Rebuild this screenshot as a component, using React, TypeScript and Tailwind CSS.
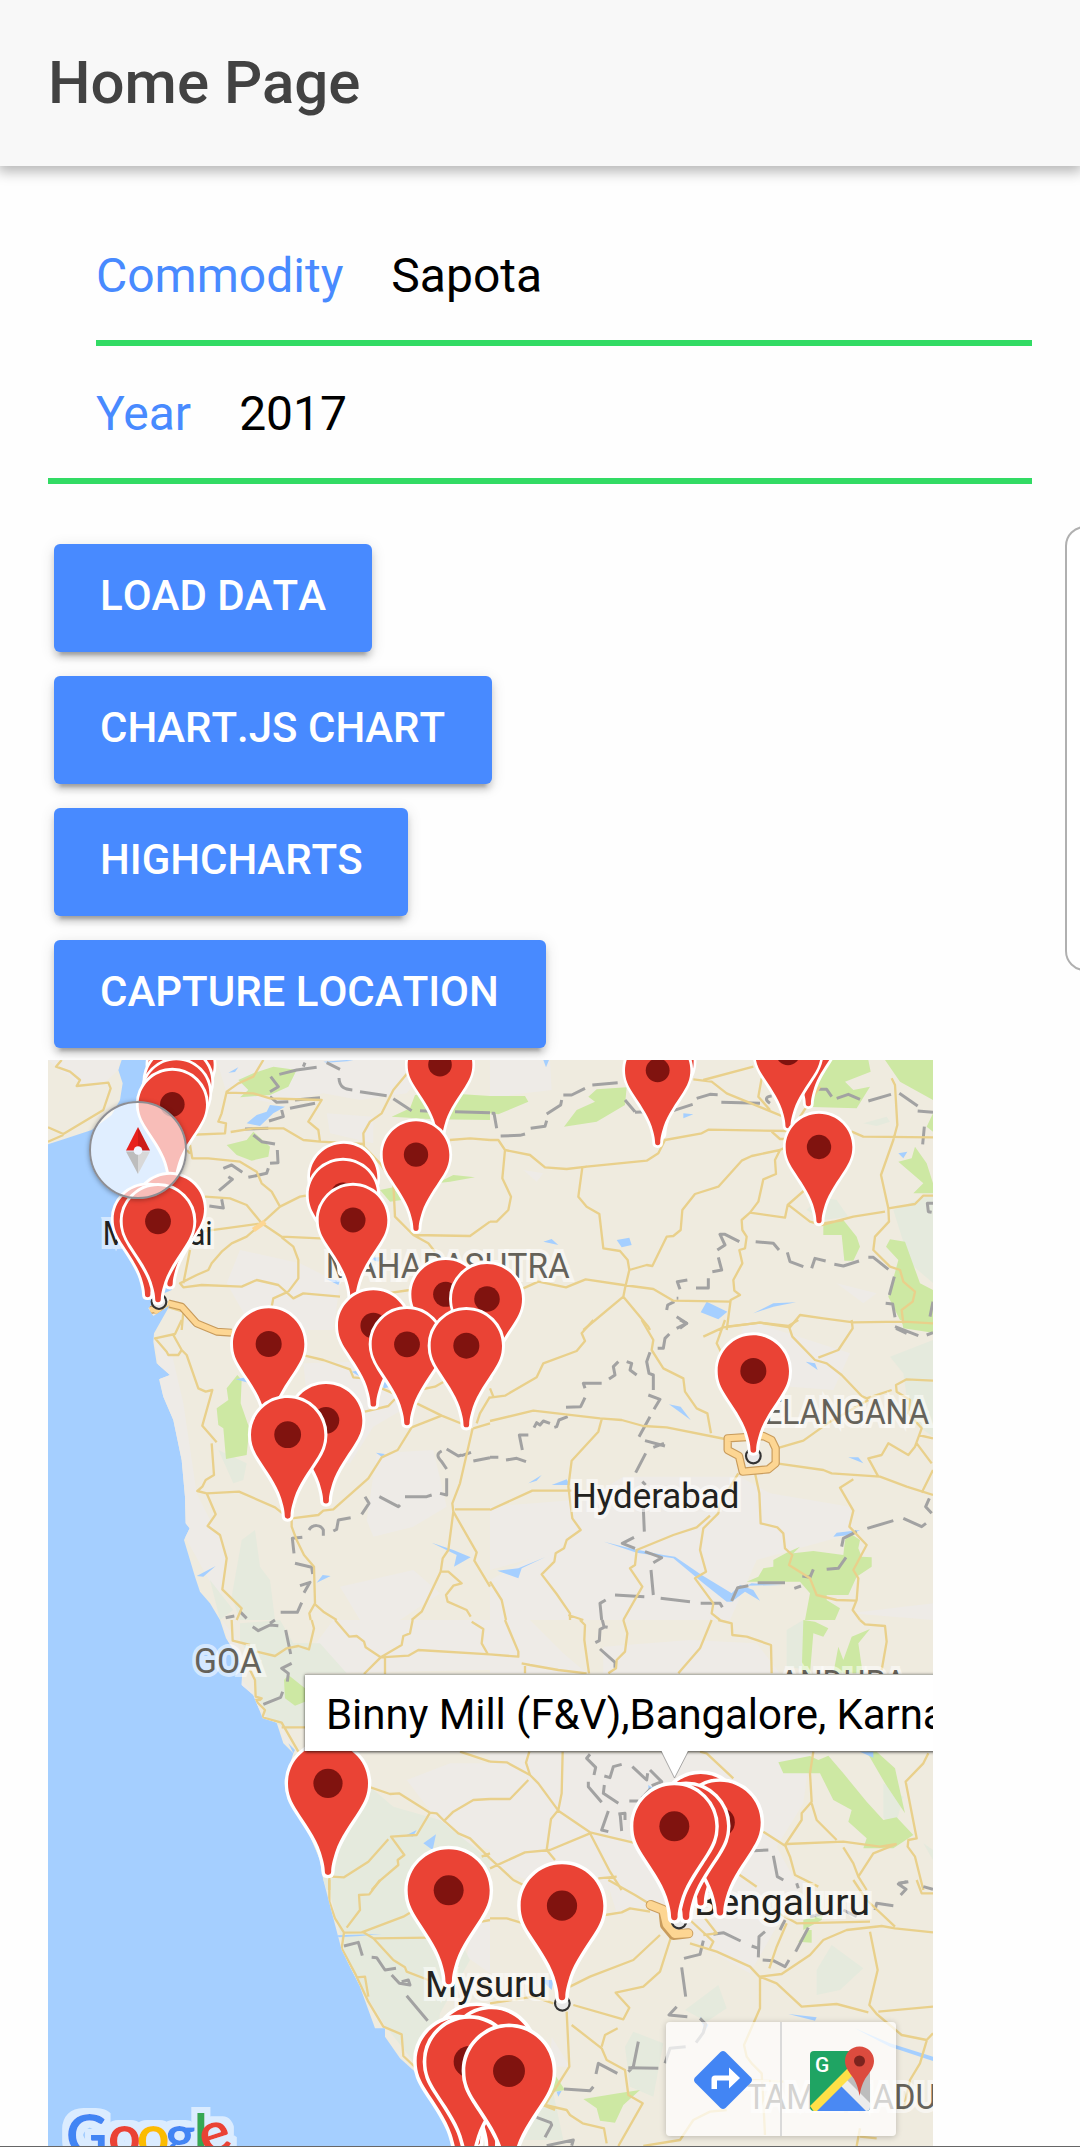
import React from "react";

type Tile = {
  x: number;
  y: number;
  urban?: string;
  hills?: string;
  parks?: string;
  lakes?: string;
  roads?: string;
  borders?: string;
};

// Terrain tiles; each path is drawn relative to its tile's origin.
const tiles: Tile[] = [
  {
    x: 0,
    y: 0,
    urban:
      "M530 30H1180L1100 130 960 150 850 130 700 160 560 130Z M860 190L1000 200 1000 280 870 250Z M600 600L780 640 900 700 880 840 640 840 560 700Z M24 30H240L235 60 180 110 120 100 60 60Z",
    parks:
      "M595 90L640 70 700 50 770 60 745 110 690 135 600 142 625 120Z M560 285L620 270 640 245 690 290 685 320 635 332 590 315Z M1055 200L1110 175 1125 135 1200 128 1350 138V210L1180 208Z M1190 400L1240 375 1305 382 1230 395Z M1020 420L1060 412 1085 450 1050 455Z",
    lakes:
      "M620 220L650 195 680 185 690 165 735 170 700 190 660 228Z M565 68L595 52 585 66Z M850 35L920 30 940 32 860 38Z M855 685L900 692 895 705Z M980 625L1030 620 1015 635Z",
    roads:
      "M65 30L48 50 90 65 120 90 110 108 205 98 212 115 190 180 70 252 24 232 M24 275L70 255 M670 30L640 80 595 100 560 125 545 190 535 215 558 220 555 250 440 255 M560 128L640 130 690 145 845 150 805 215 835 240 840 275 790 270 730 235 640 235 572 246 M840 275L970 282 M1110 60L1060 120 1025 190 990 215 970 250 972 290 1020 340 1060 400 1065 500 1120 555 1290 558 1350 515 M450 285L457 325 505 325 600 335 650 365 665 400 695 425 720 470 665 520 555 535 440 550 M495 440L570 445 620 465 665 520 725 560 840 565 910 560 M720 470L780 440 810 435 M725 562L760 590 775 630 775 685 745 725 M660 525L620 560 575 580 545 605 515 640 505 660 470 675 420 700 430 712 485 705 605 710 650 690 715 705 760 745 790 730 900 740 M745 725L700 745 695 770 630 800 M450 600L430 700 M1120 555L1165 580 1185 605 M360 790L380 770 430 785 425 840 M1230 270L1290 265 1350 270 M1040 730L1110 720 M440 300L450 310",
    borders:
      "M718 73L770 60 830 52 M790 50L795 38 M860 38L900 58 M897 84C898 112 915 118 937 120 M960 125L1040 137 M1060 146L1115 182 M1140 182L1222 186 M1245 185L1350 188 M692 80L715 110 690 125 M690 140L710 157 745 155 M765 150L840 143 M750 175L825 160 M725 180L730 200 687 213 M615 237L685 235 M640 255L665 275 705 282 M712 300L714 338 690 340 M685 355L680 370 625 382 M550 355L575 345 607 367 M565 380L577 388 537 422 M545 448L550 474 508 468",
  },
  {
    x: 1350,
    y: 0,
    urban:
      "M0 30H180L185 120 60 135 0 190Z M100 360L160 370 140 395Z M1040 700L1160 730 1120 760Z",
    hills:
      "M990 440L1040 450 1075 500 1000 510 950 480Z M1120 220L1190 200 1200 215 1160 228Z M1210 480L1330 430V700L1260 640Z",
    parks:
      "M0 138L105 138 115 155 25 193 0 190Z M222 230L260 180 315 155 295 140 320 118 410 112 405 165 320 215Z M1000 30H1135L1142 65 1065 95 1090 120 1140 110 1100 175 940 170Z M1185 30H1329V150L1230 95Z M1225 335L1265 325 1275 290 1310 340 1329 400V430H1270L1300 400Z M1000 520L1060 510 1100 560 1110 590 1090 632H1063L1055 555 1000 555Z M1188 590L1200 568 1245 575 1290 700 1329 720V810H1230L1195 740 1225 630Z M1310 230L1329 190V245Z",
    lakes:
      "M160 30H177L168 52Z M580 190L610 193 580 205Z M160 575L185 567 205 585Z M380 570L418 563 425 585 395 592Z M650 755L712 785 685 808 632 787Z M790 790L850 760 918 757 850 770Z M1225 310L1252 305 1240 325Z",
    roads:
      "M0 270L25 270 45 300 120 315 165 352 230 357 290 350 470 332 505 310 525 270 635 250 655 239 900 243 M45 300L37 385 63 440 55 480 20 515 0 515 M290 350L277 352 265 440 290 470 328 492 340 595 390 603 413 630 418 660 405 715 400 740 280 840 M418 660L470 645 487 648 530 560 550 558 572 540 577 480 615 432 685 410 755 332 785 318 870 300 890 290 M870 300L855 330 858 372 820 388 805 455 780 488 755 510 757 540 770 560 765 595 748 600 757 640 730 690 733 722 750 735 722 750 710 840 M780 488L885 503 893 465 990 380 M893 463L960 515 995 525 1090 500 1185 485 M640 90L790 50 M610 88L665 95 710 130 820 175 880 200 M815 85L805 140 840 180 M845 245L870 267 890 267 M930 200L990 110 M1085 245L1120 260 1329 262 M1205 85L1215 105 1222 225 1210 270 1173 375 1195 475 1197 515 1155 560 1150 600 1200 650 1230 660 1240 695 1275 725 1268 755 1235 780 1240 820 M1195 475L1275 462 1300 437H1329 M100 715L145 695 228 712 287 688 400 705 490 717 550 752 720 755 M400 740L475 830 480 840 M710 830L810 818 900 832 930 795 1000 805 1090 817 1240 815 1329 820 M1000 520L1060 510",
    borders:
      "M32 258L90 256 105 252 M122 235L165 229 170 212 M170 192L212 165 215 150 M220 135L245 135 285 115 M307 105L383 98 M435 185L405 150 M435 187L470 185 M620 145L660 133 683 134 M550 182L608 163 M694 157L810 160 M840 160C825 150 825 140 845 138 M985 118L1010 118 1025 140 M1040 145L1075 133 1110 148 M1135 153L1203 133 M1228 130L1283 168 M1283 183L1329 187 M1303 230L1298 283 M5 190L12 190 20 235 M1329 460L1312 460 1315 485 1325 487 M682 600L705 585 690 553 705 553 748 575 M797 575L850 580 867 600 M892 607L900 635 940 650 M965 655L975 625 1007 633 M1033 643L1060 648 1107 633 M1135 622L1150 622 1195 658 M685 622L695 660 667 665 M655 685V714H618 M570 718L562 695 592 690 M565 745L560 745 M553 755L533 765 530 780 M560 800L590 820 570 835 M1213 680L1198 735 M1187 760L1208 762 1215 802 M1218 835L1250 850 M1329 755L1320 800",
  },
  {
    x: 0,
    y: 810,
    urban:
      "M790 130L1130 120 1120 250 1000 320 930 430 820 420Z M1010 400L1180 390 1220 560 1120 620 1000 650 980 600Z M900 800L1120 750 1200 820 1080 900H960Z M345 60L395 100 430 250 470 520 560 700 540 840 435 650 360 180Z",
    hills:
      "M605 660L645 630 660 740 690 780 705 900 600 900 575 830Z M535 390L620 430 610 480 580 490Z M510 780L580 870 540 900Z",
    parks:
      "M530 265L565 240 560 205 592 165 605 180 602 250 628 325 620 405 558 417 550 325 535 315Z",
    lakes:
      "M587 178L620 172 625 188Z M1175 668L1240 690 1292 712 1242 740 1250 705Z M848 765L872 768 830 788Z M470 768L527 738 490 770Z M935 155L960 150V170Z M1030 180L1055 200 1030 205Z M1008 398L1035 402 1025 410Z",
    roads:
      "M425 0L405 42 345 55 380 95 385 105 415 105 425 90 400 45 M425 90L440 105 475 205 497 215 517 210 487 317 530 367 M515 370L522 465 497 480 487 500 472 513 500 520 597 515 705 562 740 590 M500 520L527 583 503 618 540 645 560 715 547 808 605 865 590 900 M795 107L850 120 930 148 940 172 970 175 M975 275L1045 258 1065 237 M1025 205L1060 220 M1150 207L1185 200 1215 183 M1130 250L1205 287 1275 315 M1205 287L1115 322 1073 390 1025 412 985 475 880 568 850 572 835 585 755 595 755 620 770 660 792 705 822 740 825 850 808 880 812 900 M822 850L850 875 890 900 M765 540L755 595 M1300 325L1350 310 M1310 310L1320 280 1350 230 M1298 325L1260 490 1237 550 1240 575 1225 690 1208 715 1202 755 1145 875 1115 900 M1245 568H1350 M1240 575L1310 697 1303 722 1350 800 M1205 755L1225 755 1265 790 1240 797 1218 825 1223 845 1280 870 1292 890",
    borders:
      "M1220 387L1255 408 1265 405 M1300 423L1350 413 M1265 407L1293 397 M1205 393C1190 400 1190 410 1205 425L1220 447 M1220 475V525L1200 520 M1095 530H1160L1175 525 M1018 530L1075 560 1080 555 M975 530L987 550 965 583 M932 593L895 600 890 628 880 633 M850 647L850 630C842 613 818 612 807 630 M787 652L757 655 762 700 M765 730L815 742 818 762 M780 797L810 787 792 818 M785 848L772 877H722 M600 875L620 895 M557 893L583 888",
  },
  {
    x: 1350,
    y: 810,
    urban:
      "M250 560L400 470 750 470 840 520 1080 560 1090 640 800 720 720 900H0V780L150 700Z M770 0L1080 100 1030 210 900 200 700 170Z M0 560L250 540 280 620 180 700 0 750Z M1080 880L1329 850V900Z",
    hills: "M1200 110L1329 60V350L1260 300 1240 160Z",
    parks:
      "M1235 0H1329V38L1240 25Z M820 745L850 740 850 720 890 698 930 680 910 700 970 693 1060 705 1065 660 1080 640 1110 660 1105 685 1115 710 1145 712 1145 740 1100 770 1075 825 1010 825 1010 840 1050 865 1035 900H945L960 820 930 785H770L805 770Z",
    lakes:
      "M537 253L572 260 602 300Z M947 125L975 130 983 150Z M115 490L155 465 140 482Z M185 495L230 478 240 495Z M22 752L85 745 165 712 95 745 85 775Z M342 665L420 685 520 705 555 710 635 765 725 820 750 795 790 810 810 842 765 815 725 845 710 845 640 790 550 715 440 698Z M785 790L880 795 770 797Z M1030 650L1040 638 1110 630 1080 645Z M1075 412H1105L1120 430Z",
    roads:
      "M310 0L275 40 285 63 260 93 160 130 140 172 45 227 0 233 M455 0L490 60 485 90 520 145 580 175 585 215 620 265 652 280 663 340 M0 303L130 272 330 295 395 300 460 318 530 322 705 357 M335 298L325 335 245 422 235 500 247 595 272 630 230 660 222 685 197 700 193 725 155 763 200 822 240 880 240 900 M245 512H127L0 570 M705 0L680 70 700 110 M640 50L700 22 810 8 895 18 925 0 M897 20L907 50 975 120 1010 130 1055 165 1115 228 1130 235 1205 210 M985 113L1045 90 1088 25 1085 0 M860 385L940 362 1020 305 1135 240 M1329 182L1250 178 1218 195 1220 215 1260 240 1255 280 1295 325 1275 380 1255 405 1195 370 1175 405 1135 415 1165 470 M1285 345L1329 355 M1280 370L1325 430 M1329 450L1295 518 M860 430L1000 450 1025 460 1170 470 1250 500 1329 525 M793 450L808 520 812 610 862 622 880 640 885 685 907 705 897 735 960 775 980 825 1040 840 1100 842 M1090 478L1050 503 1090 572 1078 620 1130 675 1090 750 1105 775 1100 840 1088 870 1110 900 M745 460L690 550 685 580 640 625 630 690 648 755 615 775 670 850 665 880 690 900 M660 587L620 622 550 645 440 690 435 735 420 745 457 800 400 900 M0 205L10 230 M0 785L35 840 48 900 M235 885L280 900",
    borders:
      "M560 25L590 10 570 0 M538 42L525 55 520 85H503 M480 97L470 125 477 160 490 165V210 M475 225L510 238 492 268 M480 290L447 350 M465 362L525 378 M490 382L522 370 M467 400L437 458 M457 485L467 495 M460 565L463 635 M432 652L397 670 435 685 M465 695L515 713 490 728 M483 750L490 825 M375 825L463 830 M512 835L600 845 M632 850L690 850 697 862 M725 843L743 803 775 797 M803 788L885 788 M913 805L933 798 M937 768L960 772 970 748 M1010 748L1045 745 1068 712 M1055 680L1060 655 1100 635 M1132 625L1210 602 M1240 595L1295 620 1308 610 M1318 535L1307 560 1325 580 M335 190H280L285 205 M385 125L370 140 375 165 357 177 M410 125L425 130 420 150 440 165 M285 233L272 260 228 262 M233 290L207 300 200 320 193 322 M180 310L160 303 150 315 140 308 132 323 M115 345H88L97 390 M0 412L25 412 M48 420L80 415 108 425 M347 840L330 850 335 900 M1215 20L1285 47 M1310 45L1329 38",
  },
  {
    x: 0,
    y: 1710,
    urban:
      "M880 0H1350V150L790 160 820 80Z M1100 480L1230 430 1350 430V690L1230 650Z M545 0L585 50 610 110 605 180 640 220 665 280 640 240 600 190Z M715 310L750 370 740 375Z",
    hills:
      "M600 10L720 0 760 70 840 70 920 160 795 160V320L740 330 680 290 650 220 640 130 600 60Z M760 400L990 500 1060 560 1200 600 1350 720V810H860L790 600Z",
    parks: "M732 180L745 165 795 205V245L765 257 735 235Z",
    lakes:
      "M1150 670L1188 643 1178 690Z M1100 645L1130 630 1118 650Z M745 370L765 390 760 400Z",
    roads:
      "M575 0L578 62 630 75 M650 95L705 108 740 85 775 78 807 88 822 25 815 0 M630 150L645 180 647 230 665 235 660 240 645 240 675 270 667 292 725 308 775 395 M725 322H795 M885 0L928 50 950 48 972 65 977 82 1022 112 972 162 M1022 112L1105 107 1135 90 1350 103 M1035 115V162 M1022 112L1030 107 1085 75 1090 48 1110 40 1118 0 M1295 5L1330 27 1325 70 1345 105 M1260 395L1350 425 M985 500L1050 522 1077 520 1170 578 1190 580 1210 600 1255 640 1290 655 1350 715 M1170 578L1130 645 1053 650 1093 705 1073 720 1075 735 1020 782 995 810 M1210 605L1240 575 1300 540 1350 537 M1045 658L985 725 912 772 875 770 M868 770V810 M1325 710L1350 700",
    borders:
      "M737 30L752 102 M638 20L655 32 690 15 715 17 M690 10L705 0 M755 130L725 145 745 160 742 185 M728 215L722 232 670 253",
  },
  {
    x: 1350,
    y: 1710,
    urban:
      "M0 0H120L220 100 290 160 0 160Z M340 80L600 60 800 70 870 160H340Z M0 400H960L940 550 860 680 930 810H200L0 740Z",
    hills:
      "M890 30L940 0 960 150 890 140Z M1180 490L1240 530 1210 640 1180 590Z M1300 670L1329 690V720Z",
    parks:
      "M940 0L975 5 1015 25 1000 50 970 40 960 160H935Z M1045 80L1060 120 1085 50 1140 27 1105 70 1118 160H1030Z M865 427L960 408 985 420 1015 407 1060 460 1130 545 1180 600 1220 592 1270 645 1210 685 1120 685 1130 655 1075 605 1085 570 1030 540 990 460 880 460Z M1130 395H1160L1215 445 1245 580 1185 490Z",
    lakes: "M1110 395H1150V413Z M475 495L490 505 475 520Z",
    roads:
      "M45 0L85 95 85 110 0 103 M95 130L120 135 205 150 290 160 M270 0L285 15 283 60 297 160 M400 0L412 40 405 95 380 120 378 145 355 160 M665 0L630 85 565 160 M685 0L725 10 727 45 770 50 843 75 845 160 M1110 0L1125 13 1185 18 1190 65 1175 150 M105 130V160 M630 395L650 400 730 475 M118 395L108 428 120 465 M0 425L50 427 120 465 145 490 205 572 300 637 430 668 M0 537H60L115 480 M218 395L215 520 205 570 183 597 170 690 195 720 M0 745L105 697 180 690 300 640 360 755 395 810 M0 715L70 780 100 795 M325 775L380 770 M970 395L960 460 965 545 935 580 935 600 885 675 900 710 915 765 985 800 M965 550L980 600 1040 660 M820 635L890 680 M890 672L1060 665 1170 680 1220 672 M1060 682L1090 730 1105 770 1130 810 M1105 770L1150 700 1220 672 M1315 400L1300 430 1247 485 1280 655 1255 660 1253 680 1275 710 1300 810 M745 762L800 800",
    borders:
      "M337 0L342 20 353 22 M342 22L330 28 328 62 316 68 M330 87L375 127V143 M300 403L290 415 317 442 312 465 M343 468L360 473 370 440 395 433 M427 440L470 480 473 460 M480 450L515 485 485 497 M483 505L455 535 M418 543H445 M295 485L295 500 335 547 M343 495L340 520 385 550 M355 573L335 630 355 635 M390 578L395 633 M385 582L405 580 405 600 M790 692L835 690 M850 707L862 770 880 780 M1225 790L1255 785",
  },
  {
    x: 0,
    y: 2490,
    urban: "M1300 130L1350 110V280L1280 230Z",
    hills:
      "M860 0H1110L1240 140 1290 240 1200 400 1180 560 1140 570 1030 430 920 250 900 160Z",
    lakes: "M890 166L1025 162 960 168 895 172Z",
    roads:
      "M868 0V65L885 115 912 158 905 205 945 280 985 365 1030 440 1085 463 1090 528 1150 585 M1020 0L988 43 957 45 960 90 920 143 M912 158L965 157 1090 110 1115 95 M970 157L1000 175 1170 173 M1000 175L1060 240 1095 262 1100 275 1165 300 M950 292L975 290 985 350 M1325 125L1350 120 M1310 315H1350",
    borders:
      "M912 198L955 187 967 227 M995 232L1010 233 1035 270 1068 265 M1055 285L1078 310 1110 315 1105 300 1085 305 M1100 347L1163 422",
  },
  {
    x: 1350,
    y: 2490,
    urban:
      "M350 0H950L900 70 780 280 640 200 460 80 380 100Z M185 470L240 560 180 560Z",
    hills:
      "M980 270L1025 195 1120 265 1050 330 980 345Z M585 390L685 315 710 385 650 425Z M405 500L430 455 520 490 490 650 420 620Z M0 640L190 640 220 780H60Z",
    parks:
      "M940 120L1000 100 995 120 940 150Z M950 150H965V188L925 185Z M280 657L385 640 450 630 400 675 375 728 330 722 320 685Z M150 600L195 585 225 630 165 640Z",
    lakes:
      "M895 402L980 412 975 422Z M1095 445L1200 490 1329 530V543L1200 500Z M155 300H190L185 330Z M200 635L215 632 205 650Z M630 410L655 435 630 480 640 440Z",
    roads:
      "M0 115L50 115 100 130 M345 105L395 97 420 85 480 95 M355 0L435 45 500 85 M545 165L510 275 460 320 377 338 418 383 400 418 250 375 M240 320L300 290 430 240 510 165 M600 190L680 215 780 260 808 290 875 282 960 225 1000 180 1070 150 1175 138 1215 145 1329 157 M810 290V385L762 495 770 530 785 550 815 580 820 665 825 765 M810 290L860 310 935 380 1040 372 1135 397 M1140 155L1163 270 1138 375 1160 402 1235 465 1310 480 1329 460 M1165 395L1329 380 M1310 482L1290 550 1260 600 1240 690 M230 395L238 560 165 675 230 690 240 705 278 730 342 745 350 790 M245 435L335 505 350 540 405 570 415 645 458 670 385 798 M335 500L345 465 383 445 M890 130L860 200 838 265 M600 120L670 185 660 205 M640 165L680 160 645 115 M850 90L920 130 1140 125 M1090 0L1130 60 1215 140 M0 370L130 350 190 370 M460 798L570 780 610 720 660 695 710 690 M1110 745L1100 798 M1110 770L1160 775 M780 600L880 605 M1280 0L1295 40H1329 M195 690L120 660",
    borders:
      "M670 163L700 158 752 183 M640 182L630 223 582 235 M575 262L587 350 M560 380L537 405 592 410 M630 415L647 432 640 458 618 488 M587 500L540 505 525 550 M505 565L415 563 M445 485L430 560 415 575 M382 580L325 550 318 582 M310 620L300 632 222 627 M140 712L182 728 185 735 165 772 M170 797L250 780 245 797 M825 155L807 170 805 232 M785 198L805 205 M818 240L850 242 885 260 897 240 M955 143L917 215 M885 120L870 150 M1250 5L1225 12 1248 28 1232 45 M1300 20L1329 28 M1155 90L1160 70 1210 77 M960 110L1010 98 M1060 90L1100 110 M920 10L925 25",
  },
];

// Marker heads: centre x, centre y, radius. Later entries sit in front.
const pins: [number, number, number][] = [
  [423, 45, 98],
  [415, 95, 99],
  [409, 130, 99],
  [397, 163, 101],
  [2305, -56, 98],
  [2244, 10, 98],
  [1863, 35, 98],
  [1853, 61, 98],
  [1200, 44, 97],
  [2337, 291, 100],
  [1128, 314, 100],
  [911, 382, 101],
  [909, 435, 103],
  [390, 476, 102],
  [323, 508, 102],
  [354, 514, 106],
  [939, 510, 103],
  [1217, 733, 103],
  [1341, 747, 105],
  [1000, 827, 106],
  [686, 882, 107],
  [1101, 883, 106],
  [1279, 887, 107],
  [2140, 963, 107],
  [858, 1111, 109],
  [743, 1154, 110],
  [864, 2200, 120],
  [1982, 2292, 120],
  [2040, 2317, 122],
  [1938, 2328, 123],
  [1903, 2329, 123],
  [1226, 2521, 123],
  [1566, 2567, 124],
  [1310, 2995, 127],
  [1355, 3005, 127],
  [1258, 3033, 128],
  [1288, 3035, 129],
  [1407, 3063, 131],
];

const pinPath =
  "M0-100C55-100 100-55 100 0C100 28 91 46 77 68C58 98 30 135 18 172C11 195 8 208 8 220Q8 229 0 229Q-8 229-8 220C-8 208-11 195-18 172C-30 135-58 98-77 68C-91 46-100 28-100 0C-100-55-55-100 0-100Z";

function Pin({ x, y, r }: { x: number; y: number; r: number }) {
  return (
    <g transform={`translate(${x} ${y}) scale(${r / 100})`}>
      <path d={pinPath} fill="#ea4335" stroke="#fff" strokeWidth="17" strokeLinejoin="round" style={{ paintOrder: "stroke" }} />
      <circle r="36.5" fill="#80130f" />
    </g>
  );
}

function Place({ x, y, w, size, city, children }: { x: number; y: number; w: number; size: number; city?: boolean; children: string }) {
  return (
    <text
      x={x}
      y={y}
      textLength={w}
      lengthAdjust="spacingAndGlyphs"
      fontSize={size}
      fontFamily="Roboto, sans-serif"
      fill={city ? "#222220" : "#65625a"}
      stroke="#ffffff"
      strokeOpacity="0.55"
      strokeWidth="24"
      strokeLinejoin="miter"
      style={{ paintOrder: "stroke" }}
    >
      {children}
    </text>
  );
}

function CityDot({ x, y }: { x: number; y: number }) {
  return <circle cx={x} cy={y} r="22" fill="#e9e9e9" stroke="#333" strokeWidth="6.500" />;
}

function Terrain() {
  return (
    <svg viewBox="24 30 2655 3258" className="block h-full w-full" fill="none">
      <defs>
        <clipPath id="land">
          <path d="M24 30H245L235 60 248 100 240 150 215 195 155 240 80 265 24 283Z M330 30L350 200 440 290 400 400 400 560 395 720 360 735 325 775 340 798 390 765 342 850 340 875 350 940 390 975 357 988 370 1040 400 1110 425 1230 435 1340 437 1420 449 1435 432 1470 465 1580 480 1625 510 1660 540 1710 558 1765 575 1790 607 1855 605 1905 640 1935 650 1960 668 2005 710 2018 730 2080 760 2110 745 2160 790 2310 840 2430 850 2490 880 2605 905 2700 960 2810 1005 2935 1035 2935 1035 2960 1080 3025 1130 3070 1200 3180 1250 3288H2679V30Z" />
        </clipPath>
        <filter id="halo" x="-20%" y="-30%" width="140%" height="160%">
          <feMorphology in="SourceAlpha" operator="dilate" radius="17" result="grown" />
          <feFlood floodColor="#fff" floodOpacity="0.6" />
          <feComposite in2="grown" operator="in" result="rim" />
          <feMerge>
            <feMergeNode in="rim" />
            <feMergeNode in="SourceGraphic" />
          </feMerge>
        </filter>
      </defs>
      <rect x="24" y="30" width="2655" height="3258" fill="#a5cfff" />
      <g clipPath="url(#land)">
        <rect x="24" y="30" width="2655" height="3258" fill="#efebdf" />
        {tiles.map((t, i) => (
          <g key={i} transform={`translate(${t.x} ${t.y})`}>
            <path d={t.urban} fill="#eeebe7" />
            <path d={t.hills} fill="#e5eadd" />
            <path d={t.parks} fill="#cde8a3" />
            <path d={t.lakes} fill="#a5cfff" />
          </g>
        ))}
        {tiles.map((t, i) => (
          <g key={i} transform={`translate(${t.x} ${t.y})`} strokeLinejoin="round">
            <path d={t.borders} stroke="#a2a2a2" strokeWidth="9" />
            <path d={t.roads} stroke="#e9d08b" strokeWidth="7" />
          </g>
        ))}
        <g strokeLinejoin="round">
          <path d="M330 780L360 775 345 790M385 760L425 770 470 820 530 845 575 848" stroke="#c79a5b" strokeWidth="24" />
          <path d="M330 780L360 775 345 790M383 760L425 770 470 820 530 845 577 848" stroke="#fdd693" strokeWidth="17" />
          <path d="M640 540L675 515" stroke="#fdd693" strokeWidth="15" />
          <path d="M2063 1165L2170 1158 2195 1170 2207 1195 2207 1240 2185 1258 2108 1265 2097 1218 2063 1200Z" stroke="#c99c5c" strokeWidth="25" />
          <path d="M2063 1165L2170 1158 2195 1170 2207 1195 2207 1240 2185 1258 2108 1265 2097 1218 2063 1200Z" stroke="#fdd693" strokeWidth="18" />
        </g>
        <g strokeLinecap="round" strokeLinejoin="round">
          <path d="M1832 2565L1870 2580 1875 2625 1900 2655 1945 2650" stroke="#c99c5c" strokeWidth="30" />
          <path d="M1832 2565L1870 2580 1880 2623 1904 2652 1945 2650" stroke="#fdd693" strokeWidth="24" />
        </g>
      </g>
      <Place x={188} y={585} w={330} size={99} city>Mumbai</Place>
      <Place x={857} y={684} w={732} size={104}>MAHARASHTRA</Place>
      <Place x={2116} y={1121} w={552} size={104}>TELANGANA</Place>
      <Place x={1596} y={1373} w={502} size={107} city>Hyderabad</Place>
      <Place x={462} y={1870} w={203} size={104}>GOA</Place>
      <Place x={2218} y={1934} w={380} size={104}>ANDHRA</Place>
      <Place x={1962} y={2594} w={528} size={110} city>Bengaluru</Place>
      <Place x={1155} y={2842} w={366} size={110} city>Mysuru</Place>
      <Place x={2120} y={3178} w={570} size={104}>TAMIL NADU</Place>
      <CityDot x={357} y={755} />
      <CityDot x={2140} y={1218} />
      <CityDot x={1917} y={2613} />
      <CityDot x={1567} y={2860} />
      {pins.map(([x, y, r], i) => (
        <Pin key={i} x={x} y={y} r={r} />
      ))}
      <text x={78} y={3319} fill="#4285f4" fontFamily="Lato, sans-serif" fontWeight="700" fontSize="172" filter="url(#halo)">
        G<tspan x={204} fill="#ea4335">o</tspan><tspan x={290} fill="#fbbc05">o</tspan><tspan x={376} fill="#4285f4">g</tspan><tspan x={461} fill="#34a853">l</tspan><tspan x={496} fill="#ea4335" rotate="-18">e</tspan>
      </text>
    </svg>
  );
}

function Compass() {
  return (
    <div className="absolute left-[41px] top-[41px] size-[98px] rounded-full border-2 border-[#8e8e93] bg-white/65 shadow-[0_1px_5px_rgba(0,0,0,0.35)]">
      <svg viewBox="0 0 94 94" className="size-full">
        <path d="M47 24L35 47.500H47Z" fill="#e8211d" />
        <path d="M47 24L59 47.500H47Z" fill="#cc1b18" />
        <path d="M35 48.500H47V71Z" fill="#bdbdbd" />
        <path d="M59 48.500H47V71Z" fill="#d8d8d8" />
        <circle cx="47" cy="47.500" r="4.300" fill="#f0f5ff" />
      </svg>
    </div>
  );
}

function InfoWindow() {
  return (
    <>
      <div className="absolute left-[257px] top-[614px] h-[77px] w-[760px] whitespace-nowrap border-t border-[#b5b5ad] bg-white pl-[21px] text-[42px] leading-[79px] tracking-[-0.06px] text-black shadow-[0_1px_3px_rgba(0,0,0,0.75)]">
        Binny Mill (F&amp;V),Bangalore, Karnataka
      </div>
      <svg viewBox="0 0 30 29" className="absolute left-[612px] top-[690px] h-[29px] w-[30px]">
        <path d="M1 0L14.500 28 28.500 0Z" fill="#fff" />
        <path d="M1 1L14.500 28 28.500 1" fill="none" stroke="#777" strokeOpacity="0.6" />
      </svg>
    </>
  );
}

function MapToolbar() {
  return (
    <div className="absolute left-[618px] top-[962px] flex h-[114px] w-[230px] rounded-[4px] bg-white/72 shadow-[0_1px_6px_rgba(0,0,0,0.22)]">
      <div className="flex w-[116px] items-center justify-center border-r-2 border-[#dadada] pt-[2px]">
        <svg viewBox="0 0 60 60" className="size-[60px]">
          <path d="M27.500 2Q30 0 32.500 2L58 27.500Q60 30 58 32.500L32.500 58Q30 60 27.500 58L2 32.500Q0 30 2 27.500Z" fill="#4285f4" />
          <path d="M18.500 39V29Q18.500 25.500 22 25.500H36V17.500L47 28 36 38.500V30.500H24V39Z" fill="#fff" />
        </svg>
      </div>
      <div className="flex flex-1 items-center justify-center">
        <svg viewBox="0 0 66 66" className="mb-[2px] ml-[7px] size-[66px] overflow-visible">
          <defs>
            <clipPath id="maps-tile">
              <rect x="0" y="6" width="60" height="60" rx="4" />
            </clipPath>
          </defs>
          <g clipPath="url(#maps-tile)">
            <rect y="6" width="60" height="60" fill="#1fa463" />
            <path d="M32 38L60 10V66Z" fill="#bdbdbd" />
            <path d="M30 40L3 66H60V62Z" fill="#4a89f3" />
            <path d="M30 40L36 34 62 60 60 68H58Z" fill="#ececec" />
            <path d="M0 61L52 9 56 17 5 68Z" fill="#ffe047" />
          </g>
          <text x="5" y="26.500" fontFamily="Roboto, sans-serif" fontWeight="500" fontSize="21" fill="#fff">G</text>
          <path d="M49.500 1.500C41 1.500 35 8 35 16C35 23 40 28 44 34Q48 41 49.500 51Q51 41 55 34C59 28 64 23 64 16C64 8 58 1.500 49.500 1.500Z" fill="#dc4b3e" />
          <circle cx="49.500" cy="16" r="5.500" fill="#7b231e" />
        </svg>
      </div>
    </div>
  );
}

function Field({ label, value }: { label: string; value: string }) {
  return (
    <div className="flex gap-12 text-[48px] leading-[56px]">
      <span className="text-[#488aff]">{label}</span>
      <span className="text-black">{value}</span>
    </div>
  );
}

function ActionButton({ width, children }: { width: string; children: string }) {
  return (
    <button
      className={`${width} h-[108px] whitespace-nowrap rounded-[6px] bg-[#488aff] pb-1 pl-[46px] text-left text-[42px] font-medium uppercase leading-none text-white [font-kerning:none] shadow-[0_9px_3px_-6px_rgba(0,0,0,0.2),0_6px_6px_0_rgba(0,0,0,0.14),0_3px_15px_0_rgba(0,0,0,0.12)]`}
    >
      {children}
    </button>
  );
}

export default function App() {
  return (
    <div className="relative flex h-[2147px] w-[1080px] flex-col overflow-hidden bg-[#fefefe] font-['Roboto',sans-serif]">
      <header className="flex h-[166px] shrink-0 items-center bg-[#f8f8f8] pl-12 shadow-[0_4px_12px_2px_rgba(0,0,0,0.28)]">
        <h1 className="text-[60px] font-medium leading-[70px] text-[#424242]">Home Page</h1>
      </header>

      <main className="flex flex-1 flex-col px-12 pt-12">
        <div className="ml-12 h-[132px] border-b-[6px] border-[#32db64] pt-[34px]">
          <Field label="Commodity" value="Sapota" />
        </div>
        <div className="h-[138px] border-b-[6px] border-[#32db64] pl-12 pt-[40px]">
          <Field label="Year" value="2017" />
        </div>

        <div className="flex flex-col items-start gap-6 pl-[6px] pt-[60px]">
          <ActionButton width="w-[318px]">Load Data</ActionButton>
          <ActionButton width="w-[438px]">Chart.js Chart</ActionButton>
          <ActionButton width="w-[354px]">Highcharts</ActionButton>
          <ActionButton width="w-[492px]">Capture Location</ActionButton>
        </div>

        <section className="relative mt-3 h-[1086px] w-[885px] shrink-0 overflow-hidden">
          <Terrain />
          <Compass />
          <InfoWindow />
          <MapToolbar />
        </section>
      </main>

      <div className="absolute -right-10 top-[526px] h-[445px] w-[55px] rounded-[20px] border-2 border-[#b0b0b0] bg-white" />
      <div className="absolute bottom-0 left-0 h-px w-full bg-[#666]" />
    </div>
  );
}
